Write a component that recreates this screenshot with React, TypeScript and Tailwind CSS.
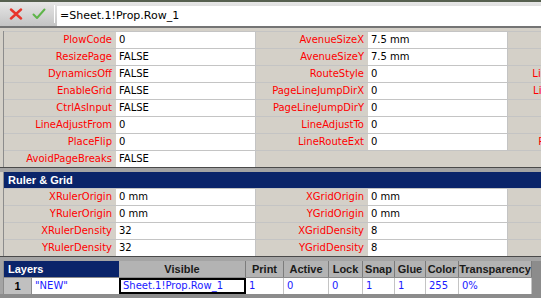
import React from "react";

type Cell = { label: string; value?: string };

const sheetRows: Cell[][] = [
  [{ label: "PlowCode", value: "0" }, { label: "AvenueSizeX", value: "7.5 mm" }, { label: "" }],
  [{ label: "ResizePage", value: "FALSE" }, { label: "AvenueSizeY", value: "7.5 mm" }, { label: "" }],
  [{ label: "DynamicsOff", value: "FALSE" }, { label: "RouteStyle", value: "0" }, { label: "LineJumpFactorX" }],
  [{ label: "EnableGrid", value: "FALSE" }, { label: "PageLineJumpDirX", value: "0" }, { label: "LineJumpFactorY" }],
  [{ label: "CtrlAsInput", value: "FALSE" }, { label: "PageLineJumpDirY", value: "0" }, { label: "" }],
  [{ label: "LineAdjustFrom", value: "0" }, { label: "LineAdjustTo", value: "0" }, { label: "" }],
  [{ label: "PlaceFlip", value: "0" }, { label: "LineRouteExt", value: "0" }, { label: "PageShapeSplit" }],
  [{ label: "AvoidPageBreaks", value: "FALSE" }],
];

const gridRows: Cell[][] = [
  [{ label: "XRulerOrigin", value: "0 mm" }, { label: "XGridOrigin", value: "0 mm" }, { label: "" }],
  [{ label: "YRulerOrigin", value: "0 mm" }, { label: "YGridOrigin", value: "0 mm" }, { label: "" }],
  [{ label: "XRulerDensity", value: "32" }, { label: "XGridDensity", value: "8" }, { label: "" }],
  [{ label: "YRulerDensity", value: "32" }, { label: "YGridDensity", value: "8" }, { label: "" }],
];

const layerCols = [
  { name: "Print", w: "w-[38px]", v: "1" },
  { name: "Active", w: "w-[45px]", v: "0" },
  { name: "Lock", w: "w-[34px]", v: "0" },
  { name: "Snap", w: "w-[32px]", v: "1" },
  { name: "Glue", w: "w-[31px]", v: "1" },
  { name: "Color", w: "w-[33px]", v: "255" },
  { name: "Transparency", w: "w-[73px]", v: "0%" },
];

function SheetRow({ cells }: { cells: Cell[] }) {
  return (
    <div className="flex h-[17px] border-t border-[#c4c4c4] overflow-hidden">
      {cells.map((c, i) => (
        <React.Fragment key={i}>
          <div className="w-[112px] shrink-0 h-[16px] pr-[4px] text-[#ff0000] leading-[16px] whitespace-nowrap overflow-hidden flex justify-end">
            <span className="shrink-0">{c.label}</span>
          </div>
          {c.value !== undefined && (
            <div className="w-[140px] shrink-0 h-[16px] bg-white pl-[3px] border-r border-[#c4c4c4] text-black leading-[16px]">
              {c.value}
            </div>
          )}
        </React.Fragment>
      ))}
    </div>
  );
}

export default function App() {
  return (
    <div className="w-[541px] h-[298px] overflow-hidden bg-[#d4d0c8] flex flex-col text-[10px] font-['DejaVu_Sans',sans-serif]">
      {/* toolbar */}
      <div className="h-[2px] bg-[#56604f]" />
      <div className="h-[24px] flex items-start bg-gradient-to-b from-[#e6e6e6] to-[#c4c4c4]">
        <div className="w-[54px] h-[24px] flex items-center gap-[9px] pl-[9px]">
          <svg width="14" height="12" viewBox="0 0 14 12">
            <path d="M2 1.5 L12 10.5 M12 1.5 L2 10.5" stroke="#e8352b" strokeWidth="2.4" strokeLinecap="round" />
          </svg>
          <svg width="14" height="12" viewBox="0 0 14 12">
            <path d="M1.5 6.5 L5 10 L12.5 1.5" stroke="#5fb54a" strokeWidth="2" fill="none" strokeLinecap="round" strokeLinejoin="round" />
          </svg>
        </div>
        <div className="w-[1px] h-[18px] mt-[3px] bg-[#9a9a9a] border-r border-white" />
        <div className="ml-[2px] mt-[4px] flex-1 h-[20px] bg-white pl-[3px] text-[11px] leading-[20px] text-black">
          =Sheet.1!Prop.Row_1
        </div>
      </div>
      <div className="h-[2px] bg-[#747474]" />

      {/* page layout section */}
      <div className="pt-[3px] pl-[3px]">
        <div className="border-l border-[#8c8c8c]">
          {sheetRows.map((r, i) => (
            <SheetRow key={i} cells={r} />
          ))}
        </div>
      </div>
      <div className="h-[1px] bg-[#4a4a4a]" />
      <div className="h-[4px] bg-[#a4a4a4]" />

      {/* ruler & grid */}
      <div className="pl-[3px]">
        <div className="border-l border-[#8c8c8c]">
          <div className="h-[16px] bg-[#0a246a] text-white font-bold text-[11px] leading-[16px] pl-[4px] font-['Liberation_Sans',sans-serif]">
            Ruler &amp; Grid
          </div>
          {gridRows.map((r, i) => (
            <SheetRow key={i} cells={r} />
          ))}
        </div>
      </div>
      <div className="h-[1px] bg-[#4a4a4a]" />
      <div className="h-[4px] bg-[#a4a4a4]" />

      {/* layers */}
      <div className="flex-1 bg-[#8c8c8c] flex flex-col">
        <div className="pl-[3px] bg-[#a4a4a4]">
          <div className="border-l border-[#8c8c8c]">
            <div className="flex h-[16px] font-bold text-[11px] leading-[16px] font-['Liberation_Sans',sans-serif]">
              <div className="w-[115px] bg-[#0a246a] text-white pl-[4px]">Layers</div>
              <div className="w-[127px] bg-[#b3b3b3] border-r border-[#7c7c7c] text-center text-[#1a1a1a]">Visible</div>
              {layerCols.map((c) => (
                <div key={c.name} className={`${c.w} shrink-0 bg-[#b3b3b3] border-r border-[#7c7c7c] text-center text-[#1a1a1a] whitespace-nowrap overflow-hidden`}>
                  {c.name}
                </div>
              ))}
              <div className="flex-1 bg-[#8c8c8c]" />
            </div>
            <div className="flex h-[17px] border-t border-[#8c8c8c] leading-[16px]">
              <div className="w-[28px] bg-[#c0c0c0] text-center font-bold text-[11px] border-r border-[#8c8c8c] font-['Liberation_Sans',sans-serif]">1</div>
              <div className="w-[87px] bg-white pl-[3px] text-[#1a1aff]">"NEW"</div>
              <div className="w-[127px] bg-white border-2 border-black pl-[2px] leading-[12px] text-[#1a1aff]">Sheet.1!Prop.Row_1</div>
              {layerCols.map((c) => (
                <div key={c.name} className={`${c.w} shrink-0 bg-white border-r border-[#c4c4c4] pl-[3px] text-[#1a1aff]`}>
                  {c.v}
                </div>
              ))}
              <div className="flex-1 bg-[#8c8c8c]" />
            </div>
          </div>
        </div>
      </div>
    </div>
  );
}
